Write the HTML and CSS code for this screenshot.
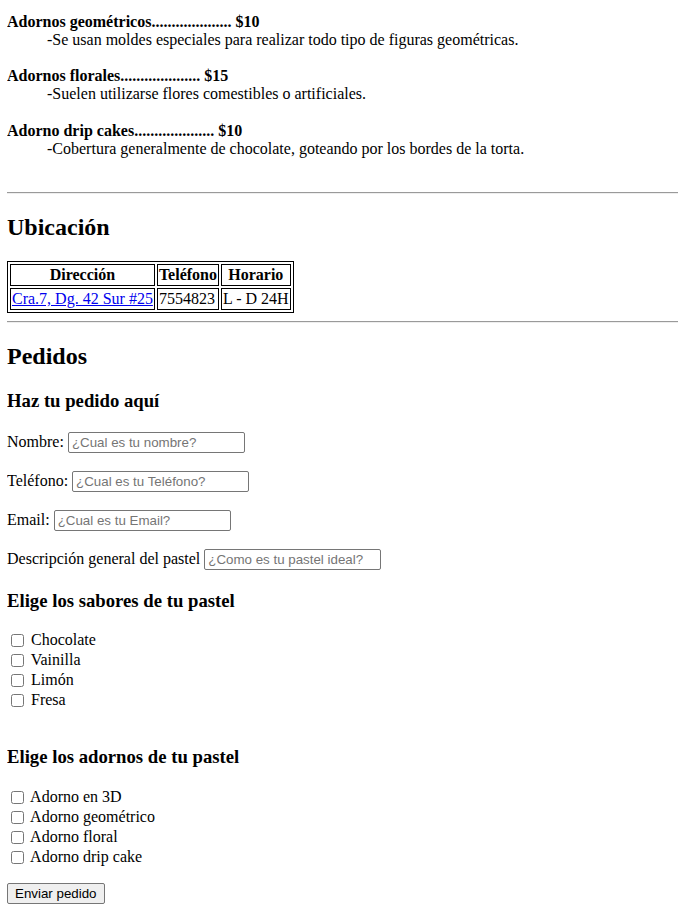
FILE: index.html
```html
<!DOCTYPE html>
<html lang="es">
<head>
<meta charset="utf-8">
<title>Pasteles</title>
<link rel="stylesheet" href="styles.css">
</head>
<body>
<dl class="menu">
  <dt>Adornos geométricos.................... $10</dt>
  <dd>-Se usan moldes especiales para realizar todo tipo de figuras geométricas.</dd>
  <dt>Adornos florales.................... $15</dt>
  <dd>-Suelen utilizarse flores comestibles o artificiales.</dd>
  <dt>Adorno drip cakes.................... $10</dt>
  <dd>-Cobertura generalmente de chocolate, goteando por los bordes de la torta.</dd>
</dl>
<hr class="rule">
<h2 class="title">Ubicación</h2>
<table class="info">
  <tr><th>Dirección</th><th>Teléfono</th><th>Horario</th></tr>
  <tr><td><a href="#">Cra.7, Dg. 42 Sur #25</a></td><td>7554823</td><td>L - D 24H</td></tr>
</table>
<hr class="rule">
<h2 class="title">Pedidos</h2>
<form class="order">
  <h3 class="sub">Haz tu pedido aquí</h3>
  <p class="field">Nombre: <input class="txt" type="text" placeholder="¿Cual es tu nombre?"></p>
  <p class="field">Teléfono: <input class="txt" type="text" placeholder="¿Cual es tu Teléfono?"></p>
  <p class="field">Email: <input class="txt" type="text" placeholder="¿Cual es tu Email?"></p>
  <p class="field">Descripción general del pastel <input class="txt" type="text" placeholder="¿Como es tu pastel ideal?"></p>
  <h3 class="sub">Elige los sabores de tu pastel</h3>
  <div class="checks">
    <label class="opt"><input class="box" type="checkbox"> Chocolate</label>
    <label class="opt"><input class="box" type="checkbox"> Vainilla</label>
    <label class="opt"><input class="box" type="checkbox"> Limón</label>
    <label class="opt"><input class="box" type="checkbox"> Fresa</label>
  </div>
  <div class="spacer"></div>
  <h3 class="sub">Elige los adornos de tu pastel</h3>
  <div class="checks">
    <label class="opt"><input class="box" type="checkbox"> Adorno en 3D</label>
    <label class="opt"><input class="box" type="checkbox"> Adorno geométrico</label>
    <label class="opt"><input class="box" type="checkbox"> Adorno floral</label>
    <label class="opt"><input class="box" type="checkbox"> Adorno drip cake</label>
  </div>
  <p class="field"><button class="send" type="button">Enviar pedido</button></p>
</form>
</body>
</html>
```
FILE: styles.css
```css
html, body {
  background: #ffffff;
}
body {
  margin: 0 0 8px 7px;
  padding-top: 13px;
  font-family: "Liberation Serif", "Times New Roman", serif;
  font-size: 16px;
  color: #000000;
}
.menu {
  margin: 0;
}
.menu dt {
  font-weight: bold;
}
.menu dd {
  margin: 0 0 0 40px;
  padding-bottom: 18.4px;
}
.rule {
  margin: 16px 0 8px 0;
  border: 0;
  border-top: 1px solid #9a9a9a;
  border-bottom: 1px solid #eeeeee;
  height: 0;
}
.title {
  font-size: 24px;
  font-weight: bold;
  margin: 20px 0;
}
.info {
  border: 1px solid #000000;
  border-spacing: 2px;
  margin: 0;
}
.info th, .info td {
  border: 1px solid #000000;
  padding: 1px;
}
.info th {
  font-weight: bold;
  text-align: center;
}
.info a {
  color: #0000ee;
  text-decoration: underline;
}
.info + .rule {
  margin-top: 8px;
}
.order {
  margin: 0;
}
.sub {
  font-size: 18.72px;
  font-weight: bold;
  margin: 18.72px 0;
}
.field {
  margin: 16px 0;
}
.txt {
  box-sizing: border-box;
  width: 177px;
  height: 21px;
  margin: 1px 0;
  padding: 1px 3px;
  border: 1px solid #767676;
  border-radius: 2px;
  font-family: "Liberation Sans", Arial, sans-serif;
  font-size: 13.33px;
  color: #000000;
  vertical-align: baseline;
}
.txt::placeholder {
  color: #757575;
}
.checks {
  display: flex;
  flex-direction: column;
}
.opt {
  display: block;
  line-height: 20px;
  height: 20px;
}
.box {
  margin: 3px 3px 3px 4px;
  width: 13px;
  height: 13px;
  vertical-align: -2px;
}
.spacer {
  height: 17px;
}
.send {
  font-family: "Liberation Sans", Arial, sans-serif;
  font-size: 13.33px;
  padding: 1px 7px;
  height: 21px;
  border: 1px solid #767676;
  border-radius: 2px;
  background: #efefef;
  color: #000000;
}
```
